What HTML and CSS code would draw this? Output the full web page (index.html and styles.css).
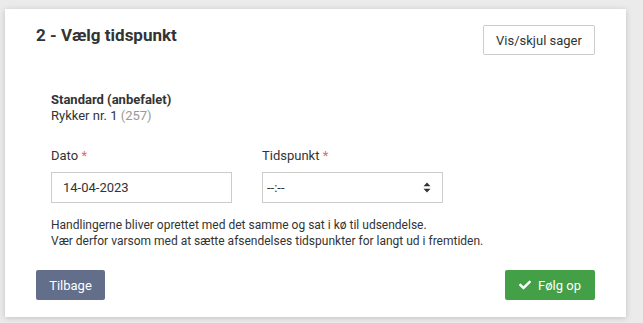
FILE: index.html
```html
<!DOCTYPE html>
<html lang="da">
<head>
<meta charset="utf-8">
<title>Vælg tidspunkt</title>
<link rel="stylesheet" href="styles.css">
</head>
<body>
<div class="page">
  <section class="card">
    <header class="card-head">
      <h2 class="title">2 - Vælg tidspunkt</h2>
      <button class="btn btn-default" type="button">Vis/skjul sager</button>
    </header>
    <div class="card-body">
      <div class="option">
        <div class="option-name">Standard (anbefalet)</div>
        <div class="option-sub">Rykker nr. 1 <span class="muted">(257)</span></div>
      </div>
      <div class="fields">
        <div class="field">
          <label class="label">Dato <span class="req">*</span></label>
          <div class="input input-date">14-04-2023</div>
        </div>
        <div class="field">
          <label class="label">Tidspunkt <span class="req">*</span></label>
          <div class="input input-time">
            <span>--:--</span>
            <svg class="spin" width="8" height="11" viewBox="0 0 8 11"><path d="M4 0.5 L7.5 4.3 H0.5 Z M0.5 6.7 H7.5 L4 10.5 Z" fill="#333"/></svg>
          </div>
        </div>
      </div>
      <p class="help">Handlingerne bliver oprettet med det samme og sat i kø til udsendelse.<br>Vær derfor varsom med at sætte afsendelses tidspunkter for langt ud i fremtiden.</p>
    </div>
    <footer class="card-foot">
      <button class="btn btn-back" type="button">Tilbage</button>
      <button class="btn btn-success" type="button"><svg class="check" width="12" height="12" viewBox="0 0 512 512"><path fill="#fff" d="M173.898 439.404l-166.4-166.4c-9.997-9.997-9.997-26.206 0-36.204l36.203-36.204c9.997-9.998 26.207-9.998 36.204 0L192 312.69 432.095 72.596c9.997-9.997 26.207-9.997 36.204 0l36.203 36.204c9.997 9.997 9.997 26.206 0 36.204l-294.4 294.401c-9.998 9.997-26.207 9.997-36.204-.001z"/></svg>Følg op</button>
    </footer>
  </section>
</div>
</body>
</html>
```

FILE: styles.css
```css
* { box-sizing: border-box; }
html, body { margin: 0; padding: 0; }
body {
  background: #ebebeb;
  font-family: Roboto, "Liberation Sans", Arial, sans-serif;
  color: #333;
  font-size: 13px;
}
.page {
  padding: 9px 17px 6px 5px;
}
.card {
  background: #fff;
  box-shadow: 0 1px 6px rgba(0, 0, 0, 0.18);
  padding: 16px 31px 17px 31px;
}
.card-head {
  display: flex;
  justify-content: space-between;
  align-items: flex-start;
  height: 30px;
}
.title {
  margin: 0;
  font-size: 17px;
  line-height: 20px;
  font-weight: 700;
  color: #333;
}
.btn {
  font-family: inherit;
  font-size: 13px;
  height: 30px;
  border-radius: 2px;
  display: inline-flex;
  align-items: center;
  justify-content: center;
  cursor: pointer;
  line-height: 1;
  white-space: nowrap;
  padding: 0;
}
.btn-default {
  background: #fff;
  border: 1px solid #ccc;
  color: #333;
  width: 112px;
}
.card-body {
  padding: 37px 0 0 15px;
}
.option {
  line-height: 16px;
}
.option-name {
  font-weight: 700;
}
.muted { color: #999; }
.fields {
  display: grid;
  grid-template-columns: 181px 181px;
  column-gap: 30px;
  margin-top: 24px;
}
.label {
  display: block;
  line-height: 16px;
  margin-bottom: 8px;
}
.req { color: #e06a6a; }
.input {
  height: 31px;
  border: 1px solid #ccc;
  display: flex;
  align-items: center;
  font-size: 13px;
}
.input-date {
  padding-left: 11px;
}
.input-time {
  padding: 0 11px 0 4px;
  justify-content: space-between;
}
.spin { display: block; }
.help {
  margin: 14px 0 0 0;
  font-size: 12px;
  line-height: 16px;
}
.card-foot {
  display: flex;
  justify-content: space-between;
  margin-top: 21px;
}
.btn-back {
  background: #626e8a;
  border: 0;
  color: #fff;
  width: 69px;
}
.btn-success {
  background: #43a047;
  border: 0;
  color: #fff;
  width: 90px;
}
.check {
  margin-right: 7px;
}
```
